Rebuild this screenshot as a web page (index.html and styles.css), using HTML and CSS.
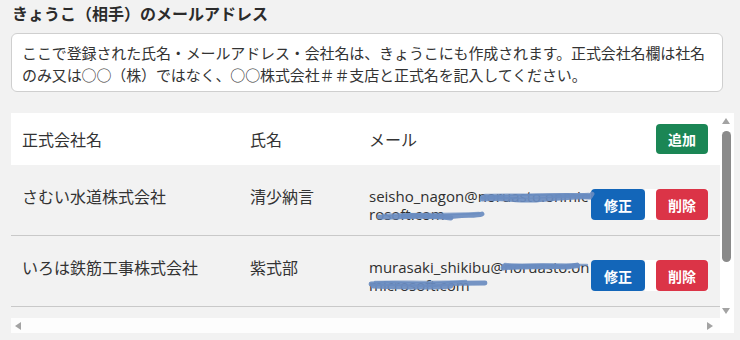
FILE: index.html
```html
<!DOCTYPE html>
<html lang="ja">
<head>
<meta charset="utf-8">
<title>メールアドレス</title>
<link rel="stylesheet" href="styles.css">
</head>
<body>
<h1 class="title">きょうこ（相手）のメールアドレス</h1>
<div class="note">ここで登録された氏名・メールアドレス・会社名は、きょうこにも作成されます。正式会社名欄は社名のみ又は○○（株）ではなく、○○株式会社＃＃支店と正式名を記入してください。</div>
<div class="frame">
  <div class="view">
    <div class="row head">
      <div class="cell c1">正式会社名</div>
      <div class="cell c2">氏名</div>
      <div class="cell c3">メール</div>
      <div class="cell c4"><button class="btn add">追加</button></div>
    </div>
    <div class="row body">
      <div class="cell c1">さむい水道株式会社</div>
      <div class="cell c2">清少納言</div>
      <div class="cell c3 mail">seisho_nagon@noruasto.onmicrosoft.com</div>
      <div class="cell c4"><button class="btn edit">修正</button><span class="del-wrap"><button class="btn del">削除</button></span></div>
      <svg class="scribble" width="709" height="70" viewBox="0 0 709 70">
        <path d="M471 34 C 490 32, 505 36, 525 35 C 545 34, 560 31, 579 32 L 581 29" />
        <path d="M472 32 C 500 33, 540 29, 577 31" />
        <path class="thin" d="M474 30 C 500 29, 540 31, 578 29" />
        <path d="M392 51 C 405 49, 425 53, 445 51 C 458 50, 466 51, 471 49" />
        <path d="M368 52 C 385 53, 410 49, 440 53" />
        <path class="thin" d="M372 50 C 395 48, 430 50, 468 48" />
      </svg>
    </div>
    <div class="row body">
      <div class="cell c1">いろは鉄筋工事株式会社</div>
      <div class="cell c2">紫式部</div>
      <div class="cell c3 mail">murasaki_shikibu@noruasto.onmicrosoft.com</div>
      <div class="cell c4"><button class="btn edit">修正</button><span class="del-wrap"><button class="btn del">削除</button></span></div>
      <svg class="scribble" width="709" height="70" viewBox="0 0 709 70">
        <path d="M493 30 C 510 32, 530 28, 550 31 C 558 32, 563 29, 567 30" />
        <path d="M492 32 C 520 29, 545 33, 566 29" />
        <path class="thin" d="M494 28 C 520 30, 545 27, 576 29" />
        <path d="M360 48 C 385 46, 410 50, 430 48 C 445 47, 460 47, 474 47" />
        <path d="M362 50 C 390 51, 420 52, 440 50" />
        <path class="thin" d="M364 46 C 390 45, 420 47, 455 45" />
      </svg>
    </div>
  </div>
  <div class="vscroll">
    <span class="arrow up"></span>
    <span class="thumb"></span>
    <span class="vspace"></span>
    <span class="arrow down"></span>
  </div>
  <div class="hscroll">
    <span class="arrow left"></span>
    <span class="hspace"></span>
    <span class="arrow right"></span>
  </div>
  <div class="corner"></div>
</div>
</body>
</html>
```
FILE: styles.css
```css
html, body {
  margin: 0;
  padding: 0;
  background: #f2f2f2;
}
body {
  padding: 1px 6px 0 11px;
  font-family: "Noto Sans CJK JP", sans-serif;
  color: #333;
}
.title {
  margin: 0 0 8px 1px;
  font-size: 16px;
  line-height: 24px;
  font-weight: 700;
  color: #2b2b2b;
}
.note {
  width: 690px;
  background: #fff;
  border: 1px solid #cfcfcf;
  border-radius: 6px;
  padding: 8px 10px 5px 10px;
  font-size: 15px;
  line-height: 22px;
  letter-spacing: -0.12px;
}
.frame {
  margin-top: 21px;
  width: 723px;
  display: grid;
  grid-template-columns: 709px 14px;
  grid-template-rows: 205px 15px;
}
.view {
  background: #f2f2f2;
  overflow: hidden;
}
.row {
  display: grid;
  grid-template-columns: 228px 119px 233px 117px;
  position: relative;
  font-size: 16px;
}
.row.head {
  background: #fff;
  height: 52px;
  align-items: center;
}
.row.body {
  height: 70px;
  border-bottom: 1px solid #c9c9c9;
  align-items: start;
}
.cell {
  padding-left: 11px;
  line-height: 18px;
}
.row.body .cell {
  padding-top: 22px;
}
.row.body .c4 {
  padding-top: 24px;
}
.c4 {
  padding-left: 0;
  display: flex;
  justify-content: flex-end;
}
.mail {
  font-family: "Open Sans", sans-serif;
  font-size: 15px;
  line-height: 18px;
  width: 221px;
  word-break: break-all;
  color: #2f2f2f;
}
.btn {
  border: 0;
  margin: 0;
  border-radius: 4px;
  color: #fff;
  font-family: "Noto Sans CJK JP", sans-serif;
  font-weight: 700;
  font-size: 14px;
  line-height: 14px;
  height: 31px;
  padding: 0 12px;
  cursor: pointer;
}
.btn.add {
  background: #1b8655;
  height: 30px;
}
.btn.edit {
  background: #1366b9;
  padding: 0 13px;
}
.del-wrap {
  display: flex;
  background: #fff;
  padding-left: 11px;
}
.btn.del {
  background: #db3447;
}
.scribble {
  position: absolute;
  left: 0;
  top: 0;
  pointer-events: none;
}
.scribble path {
  fill: none;
  stroke: #6a8cc0;
  stroke-opacity: 0.92;
  stroke-width: 4.8;
  stroke-linecap: round;
}
.scribble path.thin {
  stroke-width: 2.4;
  stroke-opacity: 0.75;
}
.vscroll {
  background: #fff;
  display: flex;
  flex-direction: column;
  align-items: flex-start;
  padding-left: 2px;
}
.arrow {
  display: block;
  width: 0;
  height: 0;
}
.arrow.up {
  margin-top: 5px;
  border-left: 4.5px solid transparent;
  border-right: 4.5px solid transparent;
  border-bottom: 6px solid #a3a3a3;
}
.arrow.down {
  margin-bottom: 4px;
  border-left: 4.5px solid transparent;
  border-right: 4.5px solid transparent;
  border-top: 6px solid #a3a3a3;
}
.thumb {
  display: block;
  margin-top: 7px;
  width: 9px;
  height: 131px;
  border-radius: 5px;
  background: #8a8a8a;
}
.vspace, .hspace {
  flex: 1;
}
.hscroll {
  background: #fdfdfd;
  display: flex;
  align-items: center;
  padding: 0 7px 0 4px;
}
.arrow.left {
  border-top: 4px solid transparent;
  border-bottom: 4px solid transparent;
  border-right: 6px solid #a3a3a3;
}
.arrow.right {
  border-top: 4px solid transparent;
  border-bottom: 4px solid transparent;
  border-left: 6px solid #a3a3a3;
}
.corner {
  background: #fff;
}
```
